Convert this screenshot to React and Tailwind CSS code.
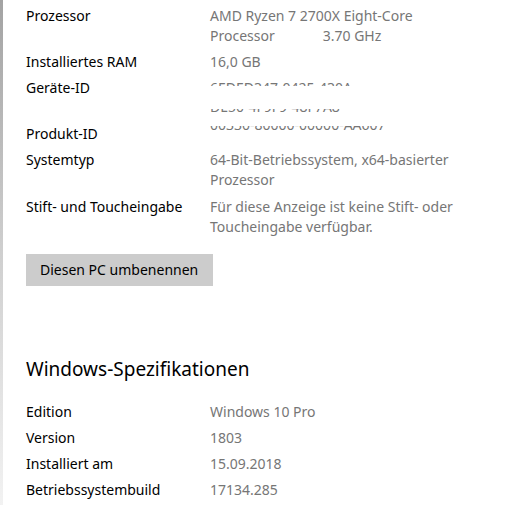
const rows = [
  { label: 'Edition', value: 'Windows 10 Pro' },
  { label: 'Version', value: '1803' },
  { label: 'Installiert am', value: '15.09.2018' },
  { label: 'Betriebssystembuild', value: '17134.285' },
]

function Row({ label, children, className = '' }) {
  return (
    <div className={`grid grid-cols-[184px_1fr] ${className}`}>
      <div className="text-black">{label}</div>
      <div className="text-[#767676]">{children}</div>
    </div>
  )
}

export default function App() {
  return (
    <div className="flex h-[505px] w-[511px] overflow-hidden bg-white font-['Noto_Sans',sans-serif] text-[14px] leading-5">
      <div className="w-[3px] shrink-0 bg-gradient-to-b from-[#a3a3a3] via-[#cfcfcf] to-[#f2f2f2]" />
      <div className="flex flex-1 flex-col pl-[23px] pt-[6px]">
        <div className="flex flex-col gap-[6px]">
          <Row label="Prozessor">
            <div>AMD Ryzen 7 2700X Eight-Core</div>
            <div>
              Processor<span className="ml-[48px]">3.70 GHz</span>
            </div>
          </Row>
          <Row label="Installiertes RAM">16,0 GB</Row>
          <Row label="Geräte-ID">
            <div className="whitespace-nowrap [clip-path:inset(0_0_12px_0)]">6EDED347-0425-430A</div>
            <div className="-mt-[1px] mb-[1px] whitespace-nowrap [clip-path:inset(12px_0_0_0)]">DE50-4F9F9-48F7A8</div>
          </Row>
          <Row label="Produkt-ID">
            <div className="-mt-[9px] whitespace-nowrap [clip-path:inset(11px_0_0_0)]">00330-80000-00000-AA607</div>
          </Row>
          <Row label="Systemtyp">
            64-Bit-Betriebssystem, x64-basierter Prozessor
          </Row>
          <Row label="Stift- und Toucheingabe" className="mt-[1px]">
            Für diese Anzeige ist keine Stift- oder Toucheingabe verfügbar.
          </Row>
        </div>

        <button className="mt-[17px] h-8 w-[187px] bg-[#cccccc] pl-[14px] text-left text-black">
          Diesen PC umbenennen
        </button>

        <h2 className="mt-[69px] text-[19px] leading-7 text-black">Windows-Spezifikationen</h2>

        <div className="mt-[19px] flex flex-col gap-[6px]">
          {rows.map((r) => (
            <Row key={r.label} label={r.label}>
              {r.value}
            </Row>
          ))}
        </div>
      </div>
    </div>
  )
}
